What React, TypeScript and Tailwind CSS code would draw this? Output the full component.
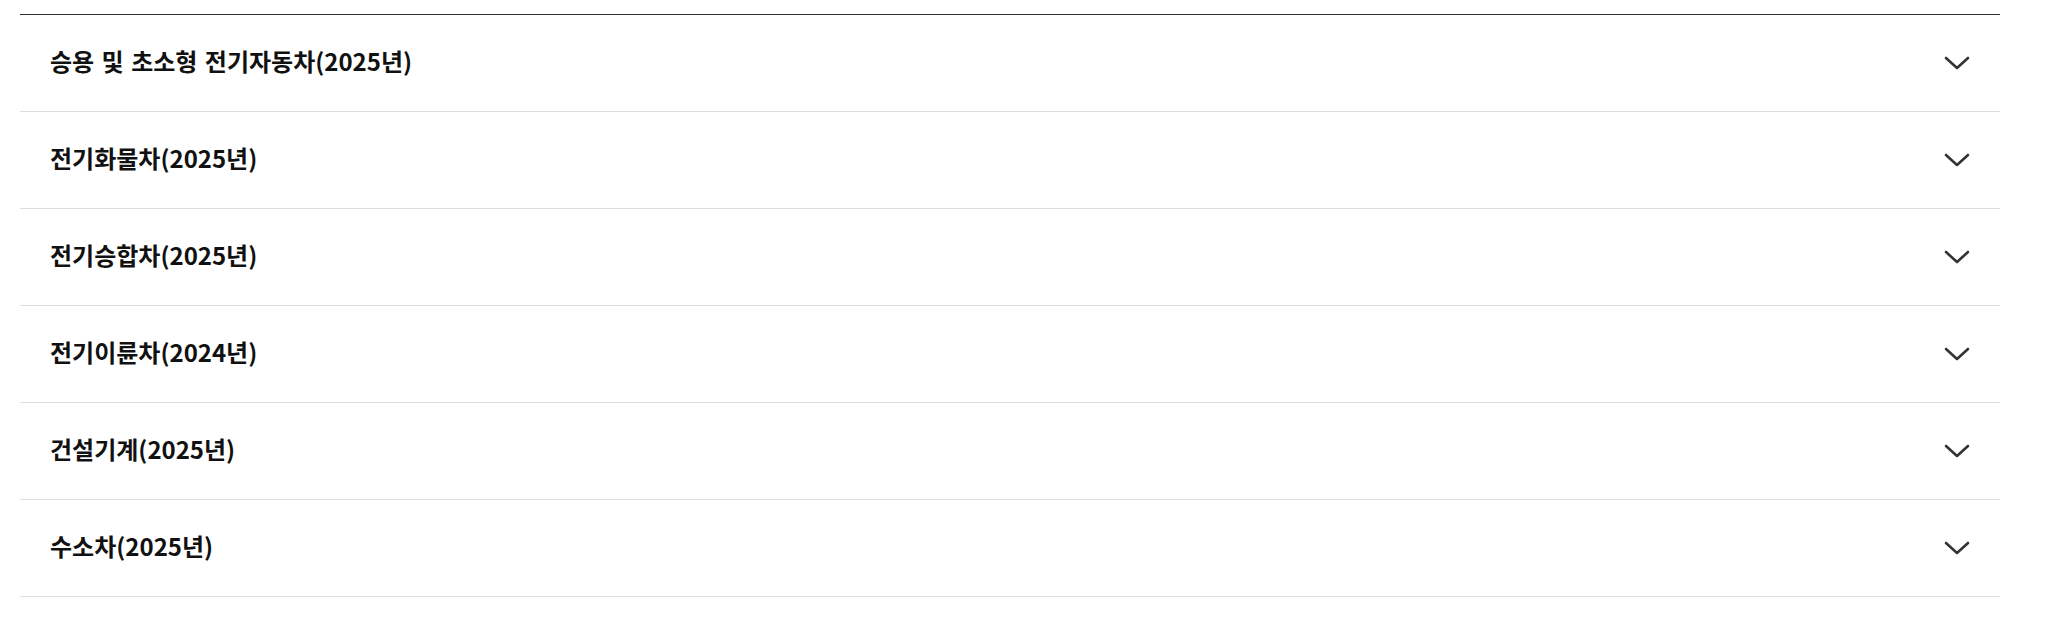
const ITEMS = [
  '승용 및 초소형 전기자동차(2025년)',
  '전기화물차(2025년)',
  '전기승합차(2025년)',
  '전기이륜차(2024년)',
  '건설기계(2025년)',
  '수소차(2025년)',
];

function Chevron() {
  return (
    <svg width="26" height="14" viewBox="0 0 26 14" fill="none">
      <path d="M2 2l11 10L24 2" stroke="#333" strokeWidth="2.6" strokeLinecap="round" strokeLinejoin="round" />
    </svg>
  );
}

export default function App() {
  return (
    <div className="bg-white w-full min-h-[618px] pt-[14px] pl-[20px] font-['Noto_Sans_CJK_KR','Noto_Sans',sans-serif]">
      <ul className="w-[1980px] border-t border-t-[#333]">
        {ITEMS.map((label) => (
          <li key={label} className="border-b border-b-[#dddddd]">
            <button className="w-full h-[96px] flex items-center justify-between pl-[30px] pr-[30px] text-left">
              <span className="text-[24px] font-bold text-[#111] [word-spacing:2px] -translate-y-[2px]">{label}</span>
              <Chevron />
            </button>
          </li>
        ))}
      </ul>
    </div>
  );
}
